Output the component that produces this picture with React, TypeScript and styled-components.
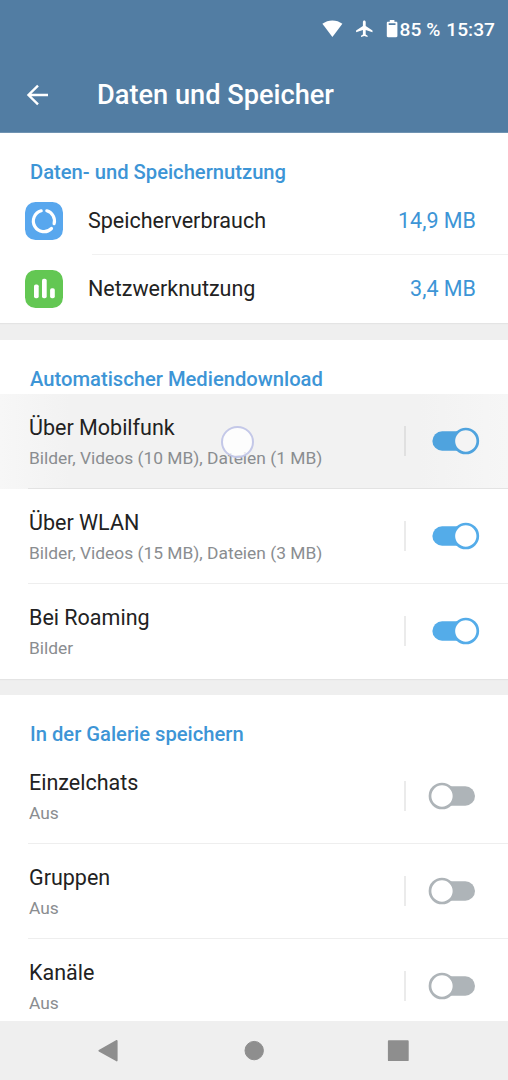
import React from "react";
import styled, { createGlobalStyle } from "styled-components";

const GlobalStyle = createGlobalStyle`
  * { box-sizing: border-box; }
  body { margin: 0; background: #fff; font-family: Roboto, "Liberation Sans", sans-serif; }
`;

const Screen = styled.div`
  width: 508px;
  height: 1080px;
  display: flex;
  flex-direction: column;
  overflow: hidden;
  background: #efefef;
`;

const Header = styled.header`
  flex: none;
  height: 133px;
  background: #527da3;
  color: #fff;
  display: flex;
  flex-direction: column;
  border-bottom: 1px solid #6f93b2;
`;

const StatusBar = styled.div`
  height: 58px;
  padding: 1px 13px 0 0;
  display: flex;
  align-items: center;
  justify-content: flex-end;
`;

const StatusIcons = styled.svg`
  flex: none;
  display: block;
`;

const StatusText = styled.span<{ $gap?: number }>`
  font-size: 19.2px;
  font-weight: 500;
  line-height: 24px;
  white-space: pre;
  margin-left: ${(p) => p.$gap ?? 0}px;
`;

const TitleBar = styled.div`
  flex: 1;
  display: flex;
  align-items: center;
  padding: 0 0 0 25px;
`;

const Title = styled.h1`
  margin: 0 0 0 48px;
  font-size: 27.2px;
  line-height: 34px;
  font-weight: 500;
  white-space: nowrap;
`;

const Content = styled.main`
  height: 888px;
  flex: none;
  overflow: hidden;
`;

const Section = styled.section<{ $height: number; $gap?: number }>`
  height: ${(p) => p.$height}px;
  margin-bottom: ${(p) => p.$gap ?? 0}px;
  background: #fff;
  box-shadow: 0 1px 1px #e4e4e4;
`;

const SectionTitle = styled.h2`
  margin: 0;
  height: 54px;
  padding: 27px 30px 0;
  font-size: 20.2px;
  line-height: 24px;
  font-weight: 500;
  color: #3d95d6;
  white-space: nowrap;
`;

const UsageRow = styled.div`
  height: 68px;
  display: flex;
  align-items: center;
  padding-left: 25px;
`;

const UsageBody = styled.div<{ $divided?: boolean }>`
  flex: 1;
  height: 68px;
  margin-left: 25px;
  padding: 0 32px 0 0;
  display: flex;
  align-items: center;
  justify-content: space-between;
  background: ${(p) =>
    p.$divided ? "linear-gradient(#f1f1f1, #f1f1f1) 4px 67px / 100% 1px no-repeat" : "none"};
`;

const Label = styled.div`
  font-size: 21.5px;
  line-height: 28px;
  color: #222;
  white-space: nowrap;
`;

const UsageValue = styled(Label)`
  color: #3d95d6;
`;

const SettingRow = styled.div<{ $pressed?: boolean; $divided?: boolean }>`
  position: relative;
  height: 95px;
  display: flex;
  align-items: center;
  padding: 0 28px 0 29px;
  background: ${(p) =>
    [
      p.$divided &&
        `linear-gradient(${p.$pressed ? "#e3e3e3, #e3e3e3" : "#eeeeee, #eeeeee"}) 28px 94px / 100% 1px no-repeat`,
      p.$pressed
        ? "linear-gradient(90deg, #f7f7f7 0, #f2f2f2 70px, #f2f2f2 420px, #f6f6f6 100%)"
        : "linear-gradient(#fff, #fff)",
    ]
      .filter(Boolean)
      .join(", ")};
`;

const SettingText = styled.div`
  flex: 1;
  display: flex;
  flex-direction: column;
  gap: 4px;
  padding-top: 1px;
`;

const Detail = styled.div`
  font-size: 17.4px;
  line-height: 24px;
  color: #8a8d90;
  white-space: nowrap;
`;

const Controls = styled.div`
  display: flex;
  align-items: center;
  padding-bottom: 2px;
`;

const Separator = styled.div<{ $pressed?: boolean }>`
  width: 2px;
  height: 30px;
  margin-right: 22px;
  background: ${(p) => (p.$pressed ? "#e0e0e0" : "#ebebeb")};
`;

const SwitchArt = styled.svg`
  display: block;
  flex: none;
`;

const TouchDot = styled.div`
  position: absolute;
  left: 221px;
  top: 32px;
  width: 33px;
  height: 32px;
  border-radius: 50%;
  border: 2px solid rgba(190, 194, 229, 0.9);
  background: rgba(255, 255, 255, 0.8);
`;

const NavBar = styled.nav`
  flex: none;
  height: 59px;
  background: #efefef;
  display: flex;
  align-items: center;
  justify-content: center;
`;

const Switch = ({ on, pressed }: { on: boolean; pressed?: boolean }) => {
  const color = on ? (pressed ? "#4fa3de" : "#54ace9") : "#aeb4b8";
  return (
    <SwitchArt width="52" height="30" viewBox="0 0 52 30">
      <rect x={on ? 4.4 : 5} y="5.3" width="42" height="19.4" rx="9.7" fill={color} />
      <circle
        cx={on ? 37.8 : 14}
        cy="15"
        r="12"
        fill={pressed ? "#f4f4f4" : "#fff"}
        stroke={color}
        strokeWidth="2.7"
      />
    </SwitchArt>
  );
};

type SettingProps = {
  label: string;
  detail: string;
  on?: boolean;
  pressed?: boolean;
  last?: boolean;
};

const Setting = ({ label, detail, on = false, pressed, last }: SettingProps) => (
  <SettingRow $pressed={pressed} $divided={!last}>
    <SettingText>
      <Label>{label}</Label>
      <Detail>{detail}</Detail>
    </SettingText>
    <Controls>
      <Separator $pressed={pressed} />
      <Switch on={on} pressed={pressed} />
    </Controls>
    {pressed && <TouchDot />}
  </SettingRow>
);

export default function App() {
  return (
    <Screen>
      <GlobalStyle />
      <Header>
        <StatusBar>
          <StatusIcons width="78" height="24" viewBox="0 0 78 24">
            <path
              d="M0.4 5.8C3.3 3.6 6.8 2.4 10.4 2.4s7.1 1.2 10 3.4L10.4 18.9Z"
              fill="#fff"
            />
            <path
              d="M50.5 14.2v-1.8l-6.8-4.3V4c0-.8-.6-1.5-1.4-1.5s-1.4.7-1.4 1.5v4.1l-6.8 4.3v1.8l6.8-2.1v4.3l-1.9 1.4v1.2l3.3-.9 3.3.9v-1.2l-1.9-1.4v-4.3Z"
              fill="#fff"
            />
            <path
              fillRule="evenodd"
              d="M67.8 3.8V2h4.6v1.8h1.8c.7 0 1.2.5 1.2 1.2v13.1c0 .7-.5 1.2-1.2 1.2H66c-.7 0-1.2-.5-1.2-1.2V5c0-.7.5-1.2 1.2-1.2ZM66.7 5.3v1.6h6.8V5.3Z"
              fill="#fff"
            />
          </StatusIcons>
          <StatusText>85 %</StatusText>
          <StatusText $gap={6}>15:37</StatusText>
        </StatusBar>
        <TitleBar>
          <svg width="24" height="24" viewBox="0 0 24 24">
            <path
              d="M23 12H3.5M13 2.7L3.5 12l9.5 9.3"
              fill="none"
              stroke="#fff"
              strokeWidth="2.4"
            />
          </svg>
          <Title>Daten und Speicher</Title>
        </TitleBar>
      </Header>

      <Content>
        <Section $height={190} $gap={17}>
          <SectionTitle>Daten- und Speichernutzung</SectionTitle>
          <UsageRow>
            <svg width="38" height="38" viewBox="0 0 38 38">
              <rect width="38" height="38" rx="10.5" fill="#58a7ee" />
              <g fill="none" stroke="#fff" strokeWidth="3.2" strokeLinecap="round">
                <path d="M21.8 8.8A10.5 10.5 0 0 1 29.1 21.7" />
                <path d="M26.5 26.5A10.6 10.6 0 1 1 16.2 8.8" />
              </g>
            </svg>
            <UsageBody $divided>
              <Label>Speicherverbrauch</Label>
              <UsageValue>14,9 MB</UsageValue>
            </UsageBody>
          </UsageRow>
          <UsageRow>
            <svg width="38" height="38" viewBox="0 0 38 38">
              <rect width="38" height="38" rx="10.5" fill="#63c753" />
              <g fill="#fff">
                <rect x="9" y="14.4" width="4.7" height="13.8" rx="1.8" />
                <rect x="17" y="8.8" width="4.7" height="19.4" rx="1.8" />
                <rect x="25.1" y="18.2" width="4.7" height="10" rx="1.8" />
              </g>
            </svg>
            <UsageBody>
              <Label>Netzwerknutzung</Label>
              <UsageValue>3,4 MB</UsageValue>
            </UsageBody>
          </UsageRow>
        </Section>

        <Section $height={339} $gap={16}>
          <SectionTitle>Automatischer Mediendownload</SectionTitle>
          <Setting
            label="Über Mobilfunk"
            detail="Bilder, Videos (10 MB), Dateien (1 MB)"
            on
            pressed
          />
          <Setting label="Über WLAN" detail="Bilder, Videos (15 MB), Dateien (3 MB)" on />
          <Setting label="Bei Roaming" detail="Bilder" on last />
        </Section>

        <Section $height={339}>
          <SectionTitle>In der Galerie speichern</SectionTitle>
          <Setting label="Einzelchats" detail="Aus" />
          <Setting label="Gruppen" detail="Aus" />
          <Setting label="Kanäle" detail="Aus" last />
        </Section>
      </Content>

      <NavBar>
        <svg width="508" height="59" viewBox="0 0 508 59">
          <g fill="#8e8e8e" stroke="#8e8e8e" strokeLinejoin="round">
            <path d="M99.2 29.7L116.8 19.8V39.6Z" strokeWidth="1.6" />
            <circle cx="254.2" cy="29.6" r="9.2" strokeWidth="1" />
            <rect x="388.8" y="20.2" width="19" height="19" strokeWidth="1.8" />
          </g>
        </svg>
      </NavBar>
    </Screen>
  );
}
